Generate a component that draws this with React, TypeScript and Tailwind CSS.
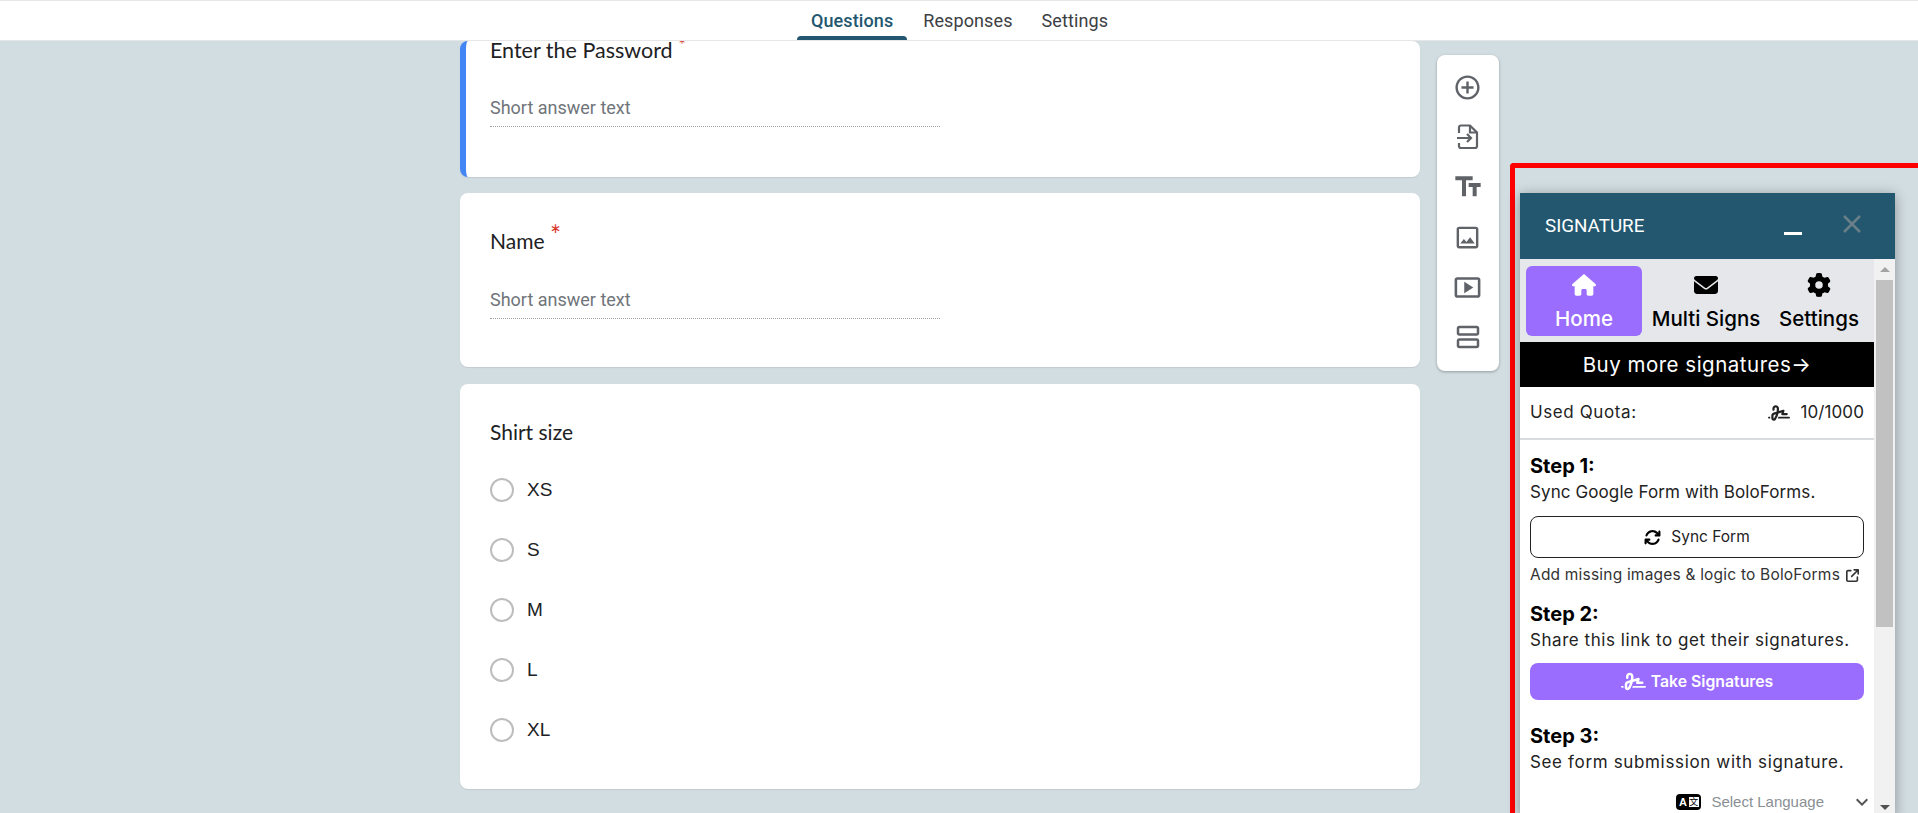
import React from "react";
import {
  FaArrowsRotate,
  FaArrowUpRightFromSquare,
  FaEnvelope,
  FaGear,
  FaHouse,
  FaSignature,
} from "react-icons/fa6";
import {
  MdAddCircleOutline,
  MdKeyboardArrowDown,
  MdOutlineImage,
  MdOutlineSmartDisplay,
  MdOutlineViewAgenda,
  MdTextFields,
} from "react-icons/md";

const poppins = "font-['Inter','Liberation_Sans',sans-serif]";

const ImportIcon = () => (
  <svg width="24" height="28" viewBox="0 0 24 28" fill="none" stroke="#5f6368" strokeWidth="2.2">
    <path d="M3 10V4.500A2 2 0 0 1 5 2.500h9l7 7V23a2 2 0 0 1-2 2H5a2 2 0 0 1-2-2v-3" />
    <path d="M14 2.500V9.500h7" />
    <path d="M1 15h14M11 11l4 4-4 4" />
  </svg>
);

const Card = ({ children, className = "" }: { children: React.ReactNode; className?: string }) => (
  <div className={`bg-white rounded-lg shadow-[0_1px_1px_rgba(0,0,0,0.08)] ${className}`}>{children}</div>
);

const ShortAnswer = () => (
  <div className="w-[450px] border-b border-dotted border-[#9aa0a6] font-['Roboto',sans-serif] text-[18px] leading-[24px] text-[#70757a] pb-[6px]">
    Short answer text
  </div>
);

const Radio = ({ label }: { label: string }) => (
  <div className="flex items-center h-[60px]">
    <span className="w-6 h-6 rounded-full border-2 border-[#bdbdbd] mr-[13px]" />
    <span className="font-['Liberation_Sans',sans-serif] text-[19px] text-[#202124]">{label}</span>
  </div>
);

const NavItem = ({ label, icon, active }: { label: string; icon: React.ReactNode; active?: boolean }) => (
  <div
    className={`flex flex-col items-center justify-center h-[70px] pt-[3px] ${
      active ? "w-[116px] bg-[#9b6dff] text-white rounded-md" : "text-black"
    }`}
  >
    <div className="h-[30px] flex items-center text-[24px]">{icon}</div>
    <div className="text-[20.500px] leading-[30px] font-medium mt-[4px] whitespace-nowrap">{label}</div>
  </div>
);

const StepTitle = ({ children }: { children: React.ReactNode }) => (
  <div className="text-[20px] leading-[26px] font-bold text-black">{children}</div>
);

const StepText = ({ children, className = "" }: { children: React.ReactNode; className?: string }) => (
  <div className={`text-[17px] leading-[26px] text-[#222] whitespace-nowrap ${className}`}>{children}</div>
);

const tools = [
  <MdAddCircleOutline key="a" size={29} />,
  <ImportIcon key="b" />,
  <MdTextFields key="c" size={32} />,
  <MdOutlineImage key="d" size={29} />,
  <MdOutlineSmartDisplay key="e" size={31} />,
  <MdOutlineViewAgenda key="f" size={30} />,
];

export default function App() {
  return (
    <div className="w-[1918px] h-[813px] overflow-hidden flex flex-col bg-[#d2dde1]">
      {/* top tabs */}
      <div className="h-[41px] shrink-0 bg-white border-t border-b border-[#e4e6e8] flex justify-center gap-[3px] font-['Roboto',sans-serif] text-[18px] tracking-[0.1px] text-[#3c4043] relative z-10">
        <div className="px-[14px] h-full relative flex items-center text-[#22576f] font-medium">
          Questions
          <span className="absolute left-0 right-0 bottom-0 h-1 bg-[#22576f] rounded-t" />
        </div>
        <div className="px-[13px] h-full flex items-center">Responses</div>
        <div className="px-[13px] h-full flex items-center">Settings</div>
      </div>

      <div className="flex-1 flex pl-[460px] min-h-0">
        {/* form column */}
        <div className="w-[960px] shrink-0 flex flex-col gap-4">
          <Card className="h-[136px] border-l-[6px] border-[#4285f4] pl-6 shrink-0">
            <div className="font-['Lato',sans-serif] text-[21.500px] leading-[18px] text-[#202124] h-[55px] whitespace-nowrap">
              Enter the Password <span className="text-[#d93025] text-[18px] relative -top-[7px]">*</span>
            </div>
            <ShortAnswer />
          </Card>
          <Card className="h-[174px] pl-[30px] pt-[36px] shrink-0">
            <div className="font-['Lato',sans-serif] text-[21px] leading-[24px] text-[#202124] h-[59px]">
              Name <span className="text-[#d93025] text-[26px] leading-[0] relative -top-[4px]">*</span>
            </div>
            <ShortAnswer />
          </Card>
          <Card className="h-[405px] pl-[30px] pt-[36px] shrink-0 mt-px">
            <div className="font-['Lato',sans-serif] text-[21px] leading-[24px] text-[#202124] mb-[16px]">Shirt size</div>
            <Radio label="XS" />
            <Radio label="S" />
            <Radio label="M" />
            <Radio label="L" />
            <Radio label="XL" />
          </Card>
        </div>

        {/* question toolbar */}
        <div className="w-[62px] h-[316px] ml-[17px] mt-[14px] shrink-0 bg-white rounded-lg shadow-[0_1px_3px_rgba(0,0,0,0.3)] flex flex-col items-center pt-[7px] pr-px text-[#5f6368]">
          {tools.map((icon, i) => (
            <div key={i} className="h-[50px] w-full flex items-center justify-center">
              {icon}
            </div>
          ))}
        </div>

        {/* red annotation box with the add-on */}
        <div className="flex-1 ml-[11px] mt-[122px] border-l-[5px] border-t-[5px] border-[#ff0000] rounded-tl-sm pl-[5px] pt-[25px] min-w-0">
          <div className={`w-[375px] h-[625px] shadow-[0_2px_12px_rgba(0,0,0,0.35)] flex flex-col ${poppins}`}>
            <div className="h-[66px] shrink-0 bg-[#22576f] flex items-center pl-[25px] text-white font-['Roboto',sans-serif] text-[18.800px]">
              <span>SIGNATURE</span>
              <span className="w-[18px] h-[3px] bg-white ml-[140px] mt-[14px]" />
              <svg className="ml-[41px] mb-[4px]" width="18" height="18" viewBox="0 0 18 18" stroke="#6b7f89" strokeWidth="2.500">
                <path d="M1 1l16 16M17 1L1 17" />
              </svg>
            </div>
            <div className="flex-1 flex min-h-0">
              <div className="w-[354px] bg-white overflow-hidden">
                <div className="h-[83px] bg-[#e5e7eb] flex items-center pl-[6px]">
                  <NavItem active label="Home" icon={<FaHouse />} />
                  <div className="w-[122px] ml-[3px] flex justify-center">
                    <NavItem label="Multi Signs" icon={<FaEnvelope />} />
                  </div>
                  <div className="w-[104px] flex justify-center">
                    <NavItem label="Settings" icon={<FaGear />} />
                  </div>
                </div>
                <div className="h-[45px] pt-px bg-black text-white text-[20.500px] tracking-[0.5px] flex items-center justify-center">
                  Buy more signatures→
                </div>
                <div className="h-[53px] pt-px border-b-2 border-[#d9dcdf] flex items-center justify-between px-[10px] text-[#222]">
                  <span className="text-[17px] tracking-[0.6px]">Used Quota:</span>
                  <span className="flex items-center gap-[10px] text-[17px] tracking-[0.1px]">
                    <FaSignature size={22} />
                    10/1000
                  </span>
                </div>
                <div className="px-[10px] pt-[13px]">
                  <StepTitle>Step 1:</StepTitle>
                  <StepText className="tracking-[0.1px]">Sync Google Form with BoloForms.</StepText>
                  <div className="h-[42px] mt-[11px] border border-[#222] rounded-lg flex items-center justify-center gap-[10px] text-[15.500px] text-[#222]">
                    <FaArrowsRotate size={17} className="text-black" />
                    Sync Form
                  </div>
                  <div className="mt-[6px] flex items-center gap-[6px] text-[15.500px] tracking-[0.2px] leading-[22px] text-[#333] whitespace-nowrap">
                    Add missing images &amp; logic to BoloForms
                    <FaArrowUpRightFromSquare size={13} />
                  </div>
                  <div className="mt-[15px]">
                    <StepTitle>Step 2:</StepTitle>
                  </div>
                  <StepText className="tracking-[0.55px]">Share this link to get their signatures.</StepText>
                  <div className="h-[37px] mt-[10px] bg-[#9b6dff] rounded-lg flex items-center justify-center gap-[5px] text-white text-[15.800px] font-semibold">
                    <FaSignature size={25} />
                    Take Signatures
                  </div>
                  <div className="mt-[23px]">
                    <StepTitle>Step 3:</StepTitle>
                  </div>
                  <StepText className="tracking-[0.65px]">See form submission with signature.</StepText>
                  <div className="mt-[15px] -mr-[10px] flex items-center justify-end text-[15px] text-[#8a8f94] font-['Liberation_Sans',sans-serif]">
                    <span className="w-[25px] h-[16px] bg-black rounded-sm flex items-center justify-center mr-[10px]">
                      <span className="text-white text-[11px] font-bold leading-none">A</span>
                      <span className="w-[10px] h-[10px] bg-white ml-[2px] text-black text-[9px] leading-[10px] text-center font-['Noto_Sans_CJK_SC',sans-serif]">文</span>
                    </span>
                    Select Language
                    <MdKeyboardArrowDown size={24} className="ml-[26px] text-[#555]" />
                  </div>
                </div>
              </div>
              {/* scrollbar */}
              <div className="w-[21px] shrink-0 bg-[#f1f1f1] flex flex-col items-center">
                <div className="h-[21px] flex items-center justify-center">
                  <span className="w-0 h-0 border-x-[5px] border-x-transparent border-b-[5px] border-b-[#a3a3a3]" />
                </div>
                <div className="w-[17px] h-[347px] bg-[#c1c1c1]" />
                <div className="h-[21px] mt-auto flex items-center justify-center">
                  <span className="w-0 h-0 border-x-[5px] border-x-transparent border-t-[5px] border-t-[#505050]" />
                </div>
              </div>
            </div>
          </div>
        </div>
      </div>
    </div>
  );
}
